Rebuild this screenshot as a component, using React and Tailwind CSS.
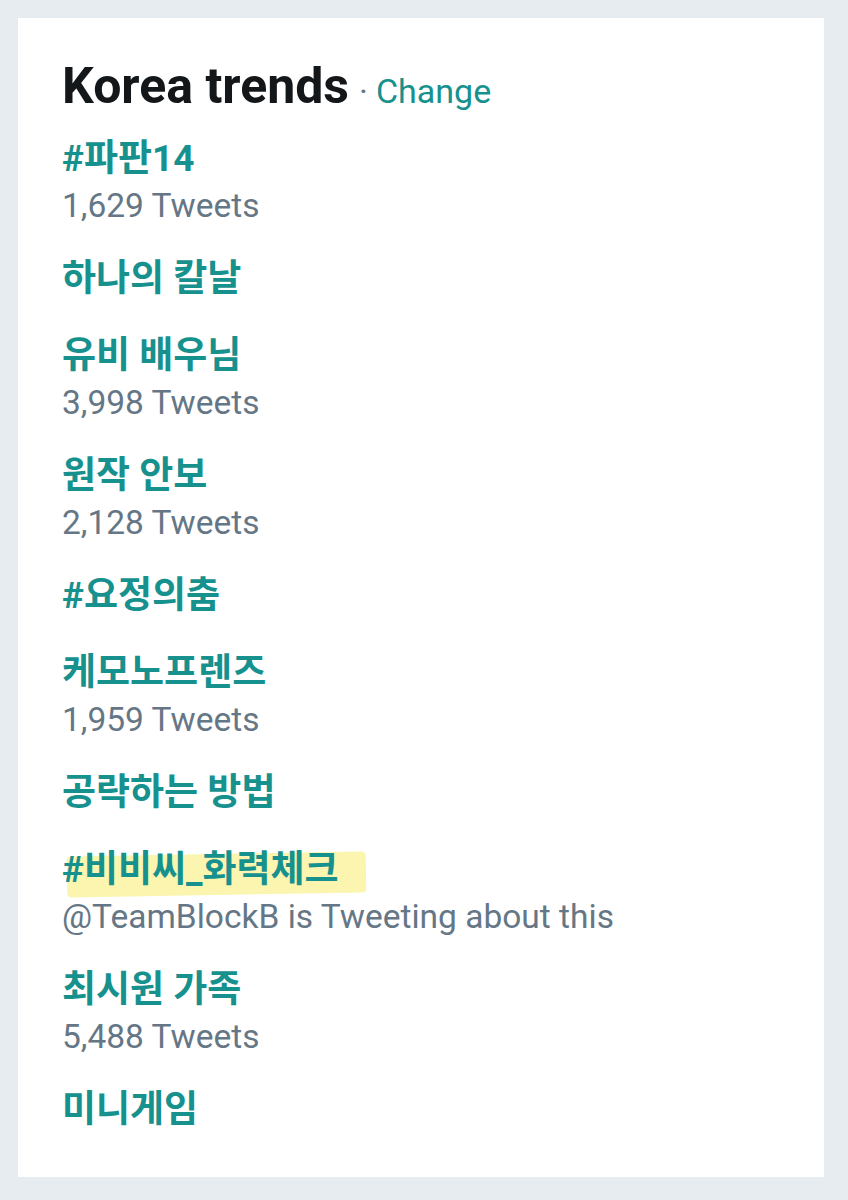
const trends = [
  { name: "#파판14", sub: "1,629 Tweets" },
  { name: "하나의 칼날" },
  { name: "유비 배우님", sub: "3,998 Tweets" },
  { name: "원작 안보", sub: "2,128 Tweets" },
  { name: "#요정의춤" },
  { name: "케모노프렌즈", sub: "1,959 Tweets" },
  { name: "공략하는 방법" },
  { name: "#비비씨_화력체크", sub: "@TeamBlockB is Tweeting about this", marked: true },
  { name: "최시원 가족", sub: "5,488 Tweets" },
  { name: "미니게임" },
];

const font = { fontFamily: "Roboto, 'Noto Sans CJK KR', sans-serif" };

export default function App() {
  return (
    <div className="h-[1200px] w-[848px] bg-[#e6ecf0] pt-[18px] pl-[18px] pr-[24px] pb-[23px]" style={font}>
      <div className="h-full bg-white pl-[44px] pt-[43px]">
        {/* Header */}
        <div className="flex items-baseline leading-[50px]">
          <h2 className="text-[50px] font-bold text-[#14171a]">Korea trends</h2>
          <span className="text-[34px] text-[#657786] ml-[10px]">·</span>
          <span className="text-[34px] text-[#17918e] ml-[8px]">Change</span>
        </div>

        {/* Trend list */}
        <div className="mt-[15px] flex flex-col gap-[21px]">
          {trends.map((t) => (
            <div key={t.name} className="flex flex-col">
              <div className="relative self-start text-[37px] font-bold leading-[56px] text-[#17918e]">
                {t.marked && (
                  <span className="absolute left-[5px] right-[-27px] top-[12px] bottom-[3px] bg-[#fbf5b0] -rotate-1 rounded-[4px]"></span>
                )}
                <span className="relative">{t.name}</span>
              </div>
              {t.sub && (
                <div className="text-[33.5px] leading-[38px] pb-[5px] text-[#657786]">{t.sub}</div>
              )}
            </div>
          ))}
        </div>
      </div>
    </div>
  );
}
